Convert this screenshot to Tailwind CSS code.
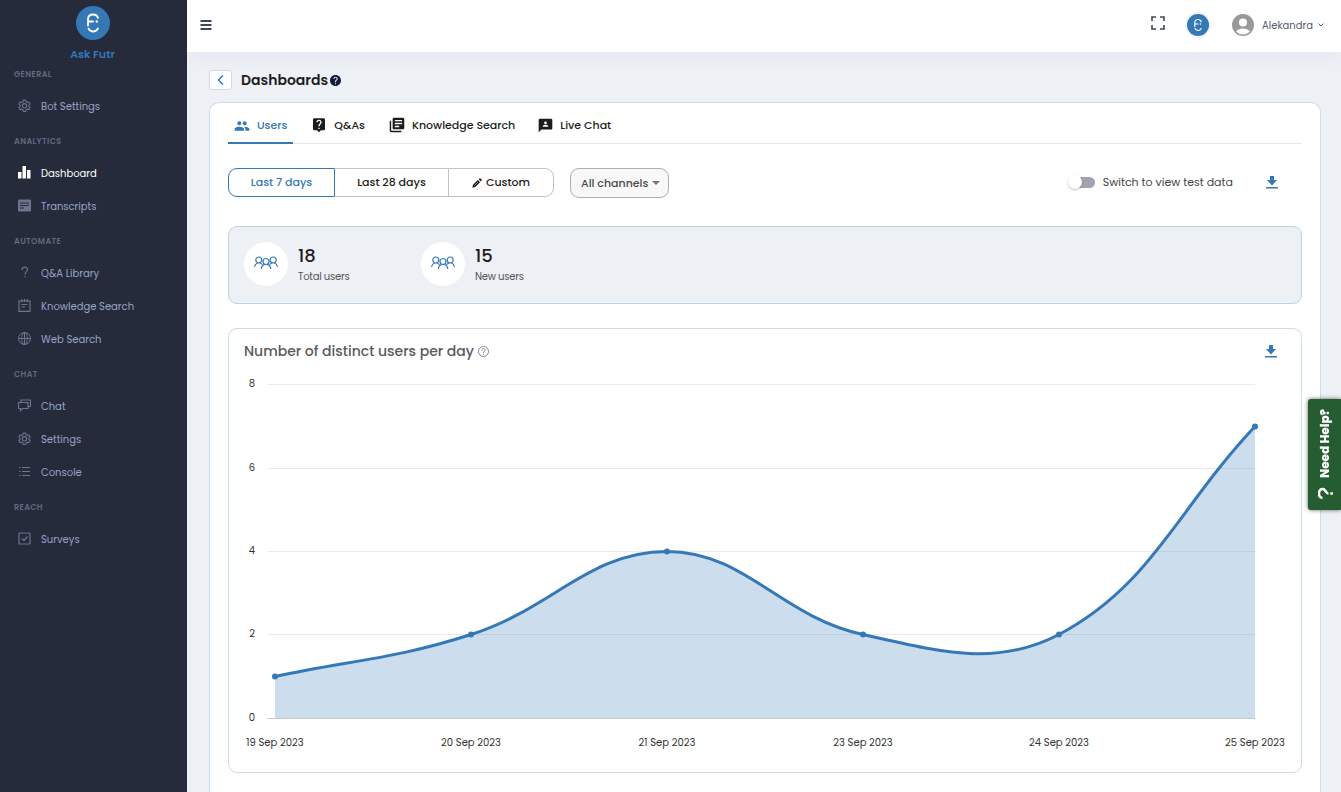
<!DOCTYPE html>
<html lang="en">
<head>
<meta charset="utf-8">
<meta name="viewport" content="width=device-width, initial-scale=1">
<title>Ask Futr – Dashboards</title>
<script src="https://cdn.jsdelivr.net/npm/@tailwindcss/browser@4"></script>
</head>
<body class="flex h-screen overflow-hidden bg-[#edf1f6] font-[Poppins,Inter,sans-serif] text-[#1c1c1c]">

<svg class="hidden" aria-hidden="true">
  <symbol id="gear" viewBox="0 0 24 24"><g fill="none" stroke="currentColor" stroke-width="2" stroke-linejoin="round"><path d="M9.700 2h4.600l.7 3.200 2 1.200 3.100-1 2.300 4-2.400 2.200v1.900l2.400 2.200-2.300 4-3.100-1-2 1.200-.7 3.100H9.700l-.7-3.100-2-1.200-3.100 1-2.300-4L4 13.500v-1.900L1.600 9.400l2.300-4 3.100 1 2-1.200z"/><circle cx="12" cy="12.500" r="4"/></g></symbol>
  <symbol id="futr" viewBox="0 0 34 34"><circle cx="17" cy="17" r="17" fill="#3478b6"/><g fill="none" stroke="#fff" stroke-width="1.800" stroke-linecap="round"><path d="M12 19.500V13.500Q12 8.500 17 8.500q4 0 5 3.500M12 15.500h5"/><path d="M12.500 22.500q1.500 3 4.700 3t4.700-3"/></g><circle cx="20.800" cy="15.500" r="1.200" fill="#fff"/></symbol>
  <symbol id="download" viewBox="0 0 12 13"><path d="M4 0h4v4h3L6 9.500 1 4h3zM0 11h12v1.500H0z" fill="#3478b6"/></symbol>
  <symbol id="crowd" viewBox="0 0 24 14"><g fill="none" stroke="#3478b6" stroke-width="1.200" stroke-linecap="round"><circle cx="4.800" cy="4" r="3"/><circle cx="19.200" cy="4" r="3"/><circle cx="12" cy="5.500" r="3"/><path d="M.7 10.500C1 8.500 2 7.500 3.500 7M6 7q1.500.5 2.200 1.500M23.300 10.500C23 8.500 22 7.500 20.500 7M18 7q-1.500.5-2.200 1.500M7.300 12.500C7.500 10.500 9 9 10.500 8.500M16.700 12.500C16.500 10.500 15 9 13.500 8.500"/></g></symbol>
</svg>

<aside class="w-[187px] shrink-0 overflow-hidden bg-[#252b3b] text-[#99a4c6]">
  <a href="#" class="flex h-[60px] flex-col items-center pt-1.5 pr-0.5 text-[11px] leading-4 font-semibold text-[#3478b6]">
    <svg class="mb-1.5 size-[34px] shrink-0"><use href="#futr"/></svg>Ask Futr
  </a>
  <nav class="text-[10px]">
    <section class="pb-1">
      <h2 class="flex h-[30px] items-center px-3.5 text-[8px] font-semibold tracking-wider text-[#626980]">GENERAL</h2>
      <a href="#" class="flex h-[33px] items-center gap-2.5 px-[18px]"><svg class="mb-0.5 size-[13px] text-[#6d748c]"><use href="#gear"/></svg>Bot Settings</a>
    </section>
    <section class="pb-1">
      <h2 class="flex h-[30px] items-center px-3.5 text-[8px] font-semibold tracking-wider text-[#626980]">ANALYTICS</h2>
      <a href="#" aria-current="page" class="flex h-[33px] items-center gap-2.5 px-[18px] text-white"><svg class="mb-0.5 size-[13px]" viewBox="0 0 13 13" fill="currentColor"><path d="M0 6h3.500v6.500H0zM4.500 0H8v12.500H4.500zM9 4h3.500v8.500H9z"/></svg>Dashboard</a>
      <a href="#" class="flex h-[33px] items-center gap-2.5 px-[18px]"><svg class="mb-0.5 size-[13px] text-[#6d748c]" viewBox="0 0 13 13"><rect y=".5" width="13" height="12" rx="1" fill="currentColor"/><path d="M2 4h9M2 6.500h9M2 9h4" stroke="#252b3b"/></svg>Transcripts</a>
    </section>
    <section class="pb-1">
      <h2 class="flex h-[30px] items-center px-3.5 text-[8px] font-semibold tracking-wider text-[#626980]">AUTOMATE</h2>
      <a href="#" class="flex h-[33px] items-center gap-2.5 px-[18px]"><svg class="mb-0.5 size-[13px] text-[#6d748c]" viewBox="0 0 13 13" fill="none" stroke="currentColor" stroke-width="1.200"><path d="M4 4c0-4 5.500-3.500 5.500-.7C9.500 5.500 7 5.500 7 8.500M7 10v1.300"/></svg>Q&amp;A Library</a>
      <a href="#" class="flex h-[33px] items-center gap-2.5 px-[18px]"><svg class="mb-0.5 size-[13px] text-[#6d748c]" viewBox="0 0 13 13" fill="none" stroke="currentColor" stroke-width="1.200"><path d="M1 2h11v10.400H1zM3.800 0v3M6.500 0v3M9.200 0v3M3.500 5.500h6M3.500 8h3.500"/></svg>Knowledge Search</a>
      <a href="#" class="flex h-[33px] items-center gap-2.5 px-[18px]"><svg class="mb-0.5 size-[13px] text-[#6d748c]" viewBox="0 0 13 13" fill="none" stroke="currentColor"><circle cx="6.500" cy="6.500" r="6"/><ellipse cx="6.500" cy="6.500" rx="2.800" ry="6"/><path d="M.5 6.500h12M6.500.5v12"/></svg>Web Search</a>
    </section>
    <section class="pb-1">
      <h2 class="flex h-[30px] items-center px-3.5 text-[8px] font-semibold tracking-wider text-[#626980]">CHAT</h2>
      <a href="#" class="flex h-[33px] items-center gap-2.5 px-[18px]"><svg class="mb-0.5 size-[13px] text-[#6d748c]" viewBox="0 0 13 13" fill="none" stroke="currentColor" stroke-width="1.200"><path d="M.5 3.500h9.500v6H4.500L2.500 11.500v-2h-2zM3 3.500V1h9.500v6.500H10"/></svg>Chat</a>
      <a href="#" class="flex h-[33px] items-center gap-2.5 px-[18px]"><svg class="mb-0.5 size-[13px] text-[#6d748c]"><use href="#gear"/></svg>Settings</a>
      <a href="#" class="flex h-[33px] items-center gap-2.5 px-[18px]"><svg class="mb-0.5 size-[13px] text-[#6d748c]" viewBox="0 0 13 13" fill="none" stroke="currentColor"><path d="M1 2.500h1.500M4 2.500h8M1 6.500h1.500M4 6.500h8M1 10.500h1.500M4 10.500h8"/></svg>Console</a>
    </section>
    <section>
      <h2 class="flex h-[30px] items-center px-3.5 text-[8px] font-semibold tracking-wider text-[#626980]">REACH</h2>
      <a href="#" class="flex h-[33px] items-center gap-2.5 px-[18px]"><svg class="mb-0.5 size-[13px] text-[#6d748c]" viewBox="0 0 13 13" fill="none" stroke="currentColor" stroke-width="1.200"><rect x="1" y="1" width="11" height="11" rx=".5"/><path d="m4 6.500 2 2 3.500-4"/></svg>Surveys</a>
    </section>
  </nav>
</aside>

<div class="flex min-w-0 flex-1 flex-col">
  <header class="z-10 flex h-[52px] shrink-0 items-center bg-white pr-4 pb-0.5 pl-[13px] text-[#555b6d] shadow-[0_8px_16px_rgba(18,38,63,0.03)]">
    <button type="button" aria-label="Toggle menu" class="mr-auto"><svg class="size-[12px]" viewBox="0 0 12 12"><path d="M.5 2h11M.5 6h11M.5 10h11" stroke="#3f455b" stroke-width="1.800"/></svg></button>
    <button type="button" aria-label="Full screen" class="mr-5 mb-1"><svg class="size-[14px]" viewBox="0 0 14 14" fill="none" stroke="#3f455b" stroke-width="1.600"><path d="M1 5V1h4M9 1h4v4M13 9v4H9M5 13H1V9"/></svg></button>
    <button type="button" aria-label="Ask Futr" class="mr-[21px] rounded-full bg-[#f1f3f6] p-0.5"><svg class="size-[22px]"><use href="#futr"/></svg></button>
    <button type="button" class="flex items-center text-[10px]"><svg class="mr-2 size-[22px]" viewBox="0 0 22 22"><circle cx="11" cy="11" r="11" fill="#999"/><circle cx="11" cy="8.500" r="4" fill="#fff"/><path d="M4 17.500q2.500-3 7-3t7 3q-3 3-7 3t-7-3z" fill="#fff"/></svg>Alekandra<svg class="ml-1 size-[8px]" viewBox="0 0 8 8" fill="none" stroke="currentColor"><path d="M1.500 2.500 4 5l2.500-2.500"/></svg></button>
  </header>

  <main class="flex min-h-0 flex-1 flex-col overflow-hidden pr-5 pl-[22px]">
    <div class="flex h-[50px] shrink-0 items-center pt-1.5">
      <button type="button" aria-label="Back" class="mr-[9px] flex h-5 w-[23px] items-center justify-center rounded-[3px] border border-[#c9dcec] bg-white"><svg class="size-[10px]" viewBox="0 0 10 10" fill="none" stroke="#3478b6" stroke-width="1.500"><path d="M7 .5 2.500 5 7 9.500"/></svg></button>
      <h1 class="text-[14px] leading-5 font-semibold">Dashboards</h1>
      <svg class="ml-0.5 size-[11px]" viewBox="2 2 20 20" fill="#141b38"><path d="M12 2C6.480 2 2 6.480 2 12s4.480 10 10 10 10-4.480 10-10S17.520 2 12 2zm1 17h-2v-2h2v2zm2.070-7.750l-.9.920C13.450 12.900 13 13.500 13 15h-2v-.5c0-1.100.450-2.100 1.170-2.830l1.240-1.260c.370-.360.590-.860.590-1.410 0-1.100-.9-2-2-2s-2 .9-2 2H8c0-2.210 1.790-4 4-4s4 1.790 4 4c0 .880-.360 1.680-.930 2.250z"/></svg>
    </div>

    <div class="shrink-0 rounded-t-[10px] border border-b-0 border-[#c9dcec] bg-white px-[18px] pb-8">
      <div role="tablist" class="flex h-[41px] border-b border-[#e6e6e6] text-[11px] font-medium">
        <button role="tab" aria-selected="true" class="flex h-[41px] items-center gap-[7px] border-b-2 border-[#3478b6] px-1.5 pt-1.5 text-[#3478b6]"><svg class="size-[16px]" viewBox="0 0 24 24" fill="currentColor"><path d="M16 11c1.660 0 2.990-1.340 2.990-3S17.660 5 16 5c-1.660 0-3 1.340-3 3s1.340 3 3 3zm-8 0c1.660 0 2.990-1.340 2.990-3S9.660 5 8 5C6.340 5 5 6.340 5 8s1.340 3 3 3zm0 2c-2.330 0-7 1.170-7 3.500V19h14v-2.500c0-2.330-4.670-3.500-7-3.500zm8 0c-.290 0-.620.020-.970.050 1.160.840 1.970 1.970 1.970 3.450V19h6v-2.500c0-2.330-4.670-3.500-7-3.500z"/></svg>Users</button>
        <button role="tab" aria-selected="false" class="ml-[17px] flex items-center gap-[7px] px-px pt-1"><svg class="size-[16px]" viewBox="0 0 24 24" fill="currentColor"><path d="M19 2H5c-1.110 0-2 .9-2 2v14c0 1.100.890 2 2 2h4l3 3 3-3h4c1.100 0 2-.9 2-2V4c0-1.100-.9-2-2-2zm-6 16h-2v-2h2v2zm2.070-7.750l-.9.920C13.450 11.900 13 12.500 13 14h-2v-.5c0-1.100.450-2.100 1.170-2.830l1.240-1.260c.370-.360.590-.860.590-1.410 0-1.100-.9-2-2-2s-2 .9-2 2H8c0-2.210 1.790-4 4-4s4 1.790 4 4c0 .880-.360 1.680-.930 2.250z"/></svg>Q&amp;As</button>
        <button role="tab" aria-selected="false" class="ml-[22px] flex items-center gap-[7px] px-px pt-1"><svg class="size-[16px]" viewBox="1 1 22 22" fill="currentColor"><path d="M4 6H2v14c0 1.100.9 2 2 2h14v-2H4V6zm16-4H8c-1.100 0-2 .9-2 2v12c0 1.100.9 2 2 2h12c1.100 0 2-.9 2-2V4c0-1.100-.9-2-2-2zm-1 9H9V9h10v2zm-4 4H9v-2h6v2zm4-8H9V5h10v2z"/></svg>Knowledge Search</button>
        <button role="tab" aria-selected="false" class="ml-[21px] flex items-center gap-[7px] px-px pt-1"><svg class="size-[15px]" viewBox="1 1 22 22" fill="currentColor"><path d="M20 2H4c-1.100 0-1.990.9-1.990 2L2 22l4-4h14c1.100 0 2-.9 2-2V4c0-1.100-.9-2-2-2zm-8 4c1.100 0 2 .9 2 2s-.9 2-2 2-2-.9-2-2 .9-2 2-2zm4 8H8v-.570c0-.810.480-1.530 1.220-1.850.850-.370 1.790-.580 2.780-.580.990 0 1.930.210 2.780.580.740.320 1.220 1.040 1.220 1.850V14z"/></svg>Live Chat</button>
      </div>

      <div class="mt-6 flex h-[30px] items-start text-[11px]">
        <div class="flex h-[29px] font-medium">
          <button type="button" aria-pressed="true" class="w-[107px] rounded-l-[9px] border border-[#3478b6] text-[#3478b6]">Last 7 days</button>
          <button type="button" class="w-[114px] border-y border-r border-[#c2c2c2]">Last 28 days</button>
          <button type="button" class="flex w-[105px] items-center justify-center gap-1 rounded-r-[9px] border-y border-r border-[#c2c2c2]"><svg class="size-[10px]" viewBox="0 0 10 10"><path d="M.3 9.700 1 6.700 5.800 1.900 8.100 4.200 3.300 9zM6.600 1.200 7.500.4Q8 0 8.500.4L9.600 1.500Q10 2 9.600 2.500L8.800 3.400z" fill="#1c1c1c"/><path d="m2.300 7.700 3.800-3.800" stroke="#fff" stroke-width=".5"/></svg>Custom</button>
        </div>
        <div class="relative ml-4">
          <select aria-label="Channel" class="h-[30px] w-[99px] appearance-none rounded-[9px] border border-[#aeaeae] bg-[#f8f8f8] pl-2.5 font-medium text-[#4a4a4a]"><option>All channels</option></select>
          <svg class="pointer-events-none absolute top-[13px] right-[9px] h-[4px] w-[8px]" viewBox="0 0 8 4"><path d="M0 0h8L4 4z" fill="#757575"/></svg>
        </div>
        <label class="ml-auto flex h-[29px] items-center gap-2 text-[#444]">
          <input type="checkbox" role="switch" class="h-[11px] w-[25px] appearance-none rounded-full bg-[#a1a3b0] before:block before:size-[14px] before:-translate-x-0.5 before:-translate-y-0.5 before:rounded-full before:bg-white before:shadow-[0_1px_2px_rgba(0,0,0,0.25)] checked:bg-[#3478b6] checked:before:translate-x-3">
          Switch to view test data
        </label>
        <button type="button" aria-label="Download report" class="mr-6 ml-[33px] flex h-[29px] items-center"><svg class="h-[13px] w-[12px]"><use href="#download"/></svg></button>
      </div>

      <section class="mt-7 flex h-[78px] items-start rounded-[9px] border border-[#bdd3e7] bg-[#edf1f6] px-[15px] pt-[15px]">
        <div class="flex w-[177px] gap-2.5">
          <span class="flex size-11 items-center justify-center rounded-full bg-white"><svg class="mb-0.5 h-[14px] w-[24px]"><use href="#crowd"/></svg></span>
          <div><p class="mt-1 text-[18px] leading-5 font-medium">18</p><p class="text-[10px] leading-[22px] tracking-tight text-[#555]">Total users</p></div>
        </div>
        <div class="flex w-[177px] gap-2.5">
          <span class="flex size-11 items-center justify-center rounded-full bg-white"><svg class="mb-0.5 h-[14px] w-[24px]"><use href="#crowd"/></svg></span>
          <div><p class="mt-1 text-[18px] leading-5 font-medium">15</p><p class="text-[10px] leading-[22px] tracking-tight text-[#555]">New users</p></div>
        </div>
      </section>

      <section class="mt-6 rounded-[9px] border border-[#c9dcec] pb-[54px]">
        <div class="flex h-[55px] items-start pt-3 pr-6 pl-[15px]">
          <h2 class="text-[14px] leading-5 font-medium text-[#5a5a5a]">Number of distinct users per day</h2>
          <svg class="mt-[5px] ml-1 size-[11px]" viewBox="0 0 11 11" fill="none" stroke="#777" stroke-width=".9"><circle cx="5.500" cy="5.500" r="5"/><path d="M3.800 4.500C3.800 2 7.300 2.300 7.300 4.300 7.300 5.500 5.500 5.400 5.500 7M5.500 7.800v1"/></svg>
          <button type="button" aria-label="Download chart" class="mt-1 ml-auto"><svg class="h-[13px] w-[12px]"><use href="#download"/></svg></button>
        </div>
        <div class="px-[46px]">
          <svg class="h-[334px] w-full overflow-visible" role="img" aria-label="Distinct users per day, 19 to 25 September 2023">
            <g stroke="#ebebeb"><line x1="-8" x2="100%" y1=".5" y2=".5"/><line x1="-8" x2="100%" y1="84.500" y2="84.500"/><line x1="-8" x2="100%" y1="167.500" y2="167.500"/><line x1="-8" x2="100%" y1="250.500" y2="250.500"/></g>
            <line x1="-8" x2="100%" y1="334.500" y2="334.500" stroke="#c8c8c8"/>
            <svg width="100%" height="334" viewBox="0 0 980 334" preserveAspectRatio="none" class="overflow-visible">
              <path fill="#3478b6" fill-opacity=".25" d="M0 292.500C78 276 120 275 196 250.500C277 225 314 167.500 392 167.500C470 167.500 506 233 588 250.500C663 267 720 284 784 250.500C877 201 902 125 980 42.500V334H0z"/>
              <path fill="none" stroke="#3478b6" stroke-width="3" vector-effect="non-scaling-stroke" d="M0 292.500C78 276 120 275 196 250.500C277 225 314 167.500 392 167.500C470 167.500 506 233 588 250.500C663 267 720 284 784 250.500C877 201 902 125 980 42.500"/>
            </svg>
            <g fill="#3478b6"><circle cx="0%" cy="292.500" r="3"/><circle cx="20%" cy="250.500" r="3"/><circle cx="40%" cy="167.500" r="3"/><circle cx="60%" cy="250.500" r="3"/><circle cx="80%" cy="250.500" r="3"/><circle cx="100%" cy="42.500" r="3"/></g>
            <g class="text-[10px]" fill="#333" text-anchor="middle">
              <text x="-23" y="3">8</text><text x="-23" y="87">6</text><text x="-23" y="170">4</text><text x="-23" y="253">2</text><text x="-23" y="337">0</text>
              <text x="0%" y="362">19 Sep 2023</text><text x="20%" y="362">20 Sep 2023</text><text x="40%" y="362">21 Sep 2023</text><text x="60%" y="362">23 Sep 2023</text><text x="80%" y="362">24 Sep 2023</text><text x="100%" y="362">25 Sep 2023</text>
            </g>
          </svg>
        </div>
      </section>
    </div>
  </main>
</div>

<button type="button" class="fixed top-[399px] right-0 z-20 flex h-[111px] w-[33px] rotate-180 items-center justify-center gap-2 rounded-r-[3px] bg-[#255c31] pr-0.5 text-[12px] font-extrabold text-white shadow-[0_0_4px_rgba(0,0,0,0.6)] [writing-mode:vertical-rl]"><svg class="size-[15px] rotate-90" viewBox="0 0 15 15" fill="none" stroke="#fff" stroke-width="2.600"><path d="M3 4.500C3.500-.5 12 0 12 4.500 12 8 7.500 7.500 7.500 10.500M7.500 12.300V15"/></svg>Need Help?</button>
</body>
</html>
